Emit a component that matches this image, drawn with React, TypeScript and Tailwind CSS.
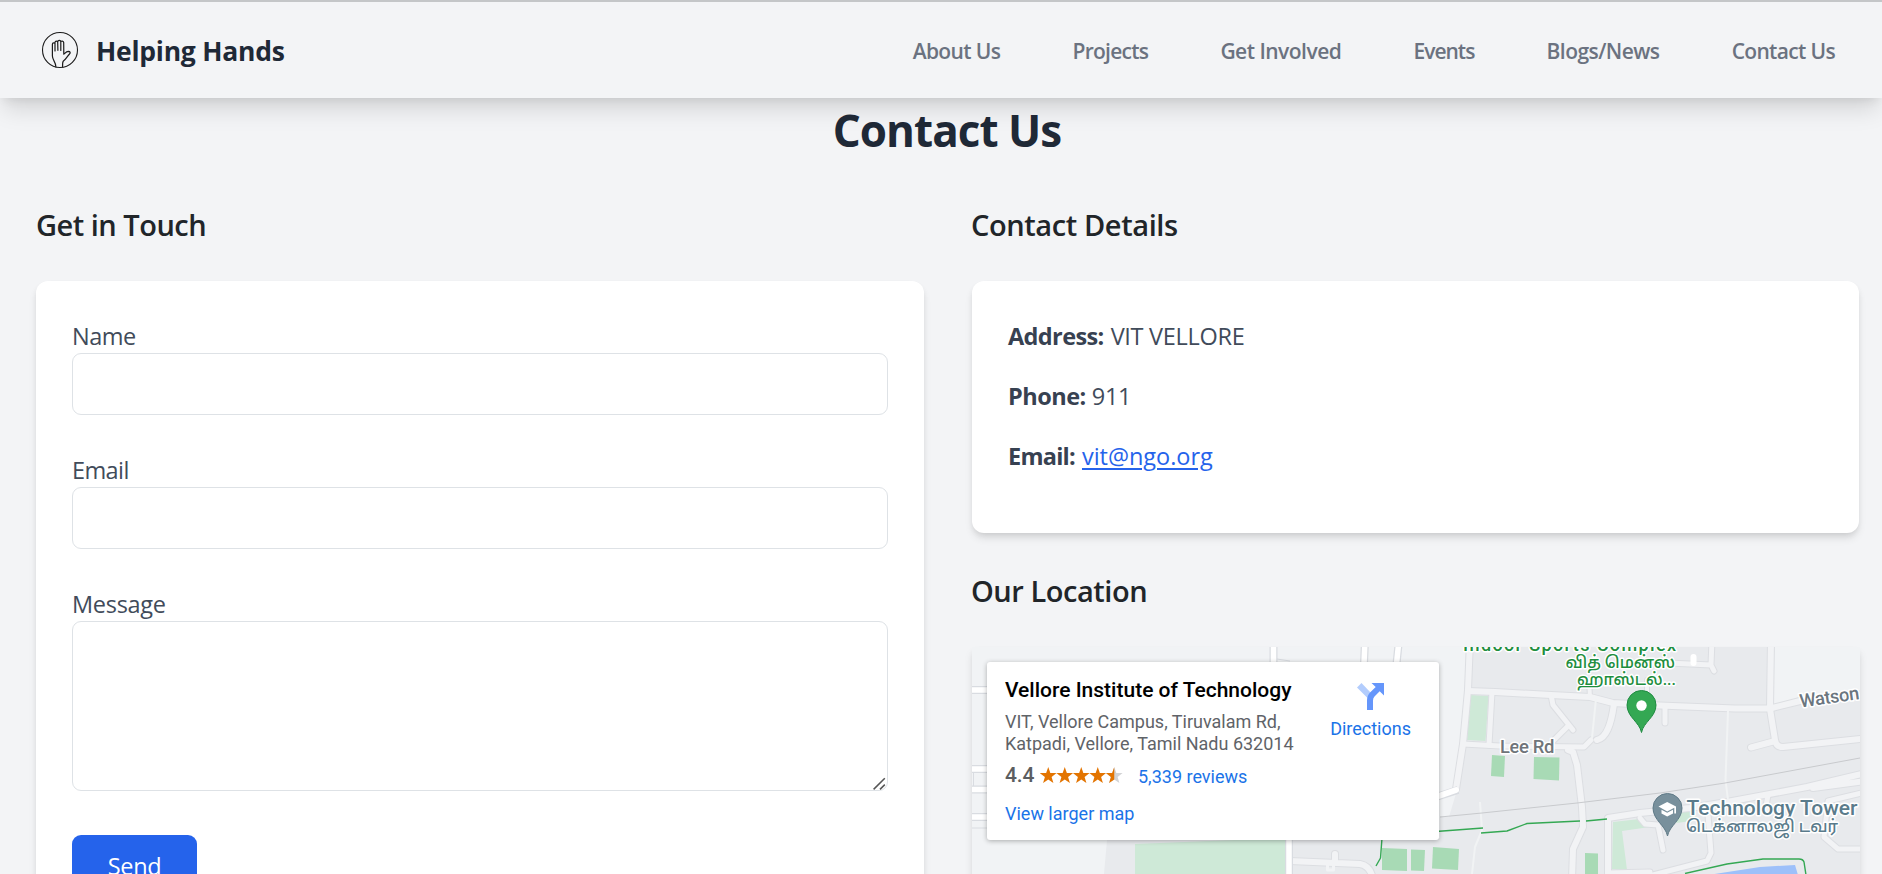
import type { ReactNode } from "react";

const navItems = [
  { label: "About Us", tracking: "tracking-[-0.62px]" },
  { label: "Projects", tracking: "tracking-[-0.76px]" },
  { label: "Get Involved", tracking: "tracking-[-0.52px]" },
  { label: "Events", tracking: "tracking-[-1px]" },
  { label: "Blogs/News", tracking: "tracking-[-0.56px]" },
  { label: "Contact Us", tracking: "tracking-[-0.66px]" },
];

function Logo() {
  return (
    <svg viewBox="0 0 38 38" className="size-[38px]" fill="none" stroke="#1c1c1c" strokeLinecap="round" strokeLinejoin="round">
      <circle cx="19" cy="19" r="17.5" strokeWidth="1.1" />
      <path
        strokeWidth="1.2"
        d="M14.9 36 C15 31 11.5 29.5 11.4 25 L11.4 13.2 C11.4 11.6 13.9 11.4 14 13 L14 20 M14 13 L14 11.2 C14.2 9.6 16.6 9.7 16.7 11.2 L16.9 19.3 M16.7 11 C16.8 8.8 19.7 8.8 19.8 10.8 L19.8 19.5 M19.8 11 C20 9.6 22.6 9.9 22.7 11.6 L22.8 23.2 C23.8 22.6 25 20.6 27.3 20.4 C29.6 20.4 29.6 22 28.3 23.2 C26.4 25 25.6 27.6 22.4 30 C21.3 31 21.6 34 21.6 36"
      />
    </svg>
  );
}

function Header() {
  return (
    <header className="relative z-10 flex h-[98px] items-center justify-between border-t-2 border-[#c4c6c8] bg-[#f3f4f6] pr-[47px] pl-[41px] shadow-[0_15px_22px_-4px_rgba(0,0,0,0.13),0_6px_9px_-4px_rgba(0,0,0,0.08)]">
      <div className="flex items-center gap-[17px]">
        <Logo />
        <span className="pt-[2px] text-[26.5px] leading-[36px] font-bold tracking-[-0.24px] text-[#1f2937]">Helping Hands</span>
      </div>
      <nav className="flex gap-[72.2px] pt-[2px]">
        {navItems.map((item) => (
          <a key={item.label} href="#" className={`text-[21px] leading-[30px] font-semibold text-[#6b7280] ${item.tracking}`}>
            {item.label}
          </a>
        ))}
      </nav>
    </header>
  );
}

function Heading({ children, className }: { children: ReactNode; className: string }) {
  return <h2 className={`-mt-[2px] mb-[38px] text-[29px] leading-[36px] font-semibold text-[#212529] ${className}`}>{children}</h2>;
}

function Label({ children, className }: { children: ReactNode; className?: string }) {
  return <label className={`block h-[36px] pt-px text-[23.5px] leading-[36px] text-[#414b5a] ${className ?? ""}`}>{children}</label>;
}

function ContactForm() {
  return (
    <form className="h-[680px] rounded-[12px] bg-white p-[36px] shadow-[0_6px_9px_-1px_rgba(0,0,0,0.1),0_3px_6px_-2px_rgba(0,0,0,0.1)]">
      <div className="mb-[36px]">
        <Label className="tracking-[-0.5px]">Name</Label>
        <input className="block h-[62px] w-full rounded-[9px] border border-[#dee2e6] px-4" />
      </div>
      <div className="mb-[36px]">
        <Label className="tracking-[-0.6px]">Email</Label>
        <input className="block h-[62px] w-full rounded-[9px] border border-[#dee2e6] px-4" />
      </div>
      <div className="mb-[44px]">
        <Label className="tracking-[-0.3px]">Message</Label>
        <div className="relative">
          <textarea className="block h-[170px] w-full resize-none rounded-[9px] border border-[#dee2e6] p-4" />
          <svg viewBox="0 0 13 13" className="absolute right-[2px] bottom-[1px] size-[13px]" stroke="#555" strokeWidth="1.5">
            <path d="M0.6 12.4 L11.8 1.2 M7 12.4 L11.8 7.6" />
          </svg>
        </div>
      </div>
      <button type="button" className="h-[60px] w-[125px] rounded-[9px] bg-[#2563eb] pt-px text-[23.5px] leading-[36px] tracking-[-0.3px] text-white">
        Send
      </button>
    </form>
  );
}

function ContactCard() {
  return (
    <div className="mb-[42px] h-[252px] w-[887px] rounded-[12px] bg-white py-[36px] pl-[36px] text-[23.5px] leading-[36px] text-[#374151] shadow-[0_6px_9px_-1px_rgba(0,0,0,0.1),0_3px_6px_-2px_rgba(0,0,0,0.1)]">
      <p className="mb-[24px] flex gap-[7px] pt-px">
        <strong className="font-bold tracking-[-0.62px]">Address:</strong>
        <span className="tracking-[-0.3px] text-[#414b5a]">VIT VELLORE</span>
      </p>
      <p className="mb-[23px] flex gap-[6px]">
        <strong className="font-bold tracking-[-0.5px]">Phone:</strong>
        <span className="tracking-[-0.3px] text-[#414b5a]">911</span>
      </p>
      <p className="flex gap-[7px] pt-px">
        <strong className="font-bold tracking-[-0.75px]">Email:</strong>
        <a href="#" className="tracking-[-0.03px] text-[#2563eb] underline decoration-2 underline-offset-[3px]">vit@ngo.org</a>
      </p>
    </div>
  );
}

const streets: { d: string; w: number }[] = [
  { w: 6, d: "M1470 640 L1468 690 L1463 744 L1456 789" },
  { w: 6, d: "M1468 691 L1495 692 L1551 695 L1590 697 L1613 703 L1660 705.500 L1735 708.500 L1770 708.500 L1800 701" },
  { w: 5, d: "M1492 692 L1489 745" },
  { w: 5, d: "M1463 744 L1500 746 L1584 747 L1591 740" },
  { w: 6, d: "M1597 740 C1606 738 1611 726 1614 704" },
  { w: 5, d: "M1551 695 L1553 705 L1573 730 M1567 727 L1552 742" },
  { w: 6, d: "M1568 750 L1573 752 L1577 765 L1582 807 L1583 827 L1573 849 L1572 880" },
  { w: 4, d: "M1589 680 L1590 697 M1647 680 L1647 700" },
  { w: 5, d: "M1668 663 L1711 665 M1712 640 L1711 665 L1714 671" },
  { w: 6, d: "M1771 640 L1770 709 L1775 740 Q1776 747 1783 747 L1870 738 M1775 741 L1751 747.500" },
  { w: 5, d: "M1665 708 L1665 723" },
  { w: 6, d: "M1608 880 L1608 818 L1640 813 L1690 808 L1727 802 L1807 787 L1866 773 M1813 788 L1866 781" },
  { w: 5, d: "M1768 795 L1765 812" },
  { w: 5, d: "M1866 792 L1828 801 L1824 837 L1838 849 L1866 849" },
  { w: 5, d: "M1645 877 L1707 861 L1711 853 L1708 815" },
  { w: 5, d: "M1640 818 L1645 824 L1658 825 L1663 850" },
  { w: 5, d: "M1608 873 L1650 872" },
  { w: 6, d: "M1290 861 L1360 864 Q1371 866 1373 880 M1335 854 L1335 862" },
];

const fields = ["1492,755 1505,756 1504,777 1491,776", "1534,757 1559.500,757.500 1559,780.500 1533.500,779", "1433,847 1459,849 1458,870 1432,868.500", "1382,848 1407,849 1407,871 1382,870", "1411,849.500 1425,850 1424,871 1411,870.500", "1585,853 1598,853.500 1598,876 1585,876"];

function MapCanvas() {
  return (
    <svg viewBox="972 647 888 227" className="block h-[227px] w-[888px]" fill="none" strokeLinejoin="round" fontFamily="Roboto, 'Noto Sans Tamil', sans-serif">
      <rect x="972" y="647" width="888" height="227" fill="#f1f3f5" />
      <path fill="#e8eaed" d="M1470 647 L1771 647 L1771 708 L1860 690 L1860 874 L1292 874 L1292 838 L1440 838 L1440 817 L1449 817 L1457 790 L1463 744 Z" />
      <path fill="#e8eaed" d="M1107 840 L1286 840 L1286 874 L1104 874 Z" />
      <path fill="#cee9d7" d="M1135 844 L1286 838 L1286 874 L1135 874 Z M1471 695 L1488.500 696 L1485.500 741 L1467 740 Z M1613 822 L1640 819 L1657 826 L1622 831 L1627 870 L1612 869 Z M1679 812 L1690 810 L1700 820 L1676 823 Z" />
      {fields.map((points) => (
        <polygon key={points} points={points} fill="#a8dab5" />
      ))}

      {streets.map((s) => (
        <path key={s.d} d={s.d} stroke="#dcdee2" strokeWidth={s.w + 2} strokeLinecap="round" />
      ))}
      {streets.map((s) => (
        <path key={`${s.d}-fill`} d={s.d} stroke="#f2f3f5" strokeWidth={s.w} strokeLinecap="round" />
      ))}
      <rect x="1327.500" y="864" width="6" height="6" stroke="#f2f3f5" strokeWidth="3" />
      <path stroke="#f1f3f4" strokeWidth="2" d="M1596 699 L1592 738 M1480 802 L1482 830 L1475 847 L1472 874 M1728 711 L1725.500 780 L1728 800" />

      <path stroke="#d9dce1" strokeWidth="8" d="M972 690 H990 M972 769 H990 M972 789.500 H990 M972 817 H990 M1273.500 640 V664 M1365 640 L1364 664 M1399 640 L1396.500 664 M1289 838 V880 M1436 797 L1458 790" />
      <path stroke="#d9dce1" strokeWidth="1" d="M972 828 H990 M973.500 772 V786 M1277 659 L1290 661" />
      <path stroke="#fff" strokeWidth="5.500" d="M972 690 H990 M972 769 H990 M972 789.500 H990 M972 817 H990 M1273.500 640 V664 M1365 640 L1364 664 M1399 640 L1396.500 664 M1289 838 V880" />
      <path stroke="#fff" strokeWidth="6" strokeLinecap="round" d="M1436 797 L1456 790 M1693.500 657 V663" />

      <path stroke="#c8cacd" strokeWidth="1" d="M1440 817 L1482 813 L1577 803 L1660 793 L1725 783 L1860 758" />
      <path stroke="#34a853" strokeWidth="1.400" d="M1436 831.500 L1483 828 M1481 833 L1507 831 L1527 823.500 L1580 821 M1586 821 L1607 819 M1382 838 L1380.500 858 L1376 866" />
      <path fill="#9dc0fa" d="M1708 875 L1760 867 L1795 865 L1798 875 Z" />
      <path stroke="#34a853" strokeWidth="1.400" d="M1685 873.500 L1727 864 L1763 859 H1799 Q1803 859 1804 862 L1806 875" />

      <g stroke="#fff" strokeWidth="3" paintOrder="stroke">
        <text x="1463" y="651" fontSize="18" fontWeight="500" fill="#1e8e3e" textLength="213">Indoor Sports Complex</text>
        <text x="1565.500" y="668" fontSize="17" fontWeight="500" fill="#1e8e3e" textLength="109.500" lengthAdjust="spacingAndGlyphs">வித் மென்ஸ்</text>
        <text x="1577" y="685" fontSize="17" fontWeight="500" fill="#1e8e3e" textLength="99" lengthAdjust="spacingAndGlyphs">ஹாஸ்டல்...</text>
        <text x="1500" y="753" fontSize="18.500" fontWeight="500" fill="#70757a" textLength="54.500">Lee Rd</text>
        <text transform="translate(1800.500 707.500) rotate(-8)" fontSize="18.500" fontWeight="500" fill="#6b7680" textLength="60">Watson</text>
        <text x="1686.500" y="814.500" fontSize="20.500" fontWeight="500" fill="#5a7b8b" textLength="171" lengthAdjust="spacingAndGlyphs">Technology Tower</text>
        <text x="1686" y="832" fontSize="17" fontWeight="500" fill="#5a7b8b" textLength="152" lengthAdjust="spacingAndGlyphs">டெக்னாலஜி டவர்</text>
      </g>

      <path fill="#34a853" stroke="#1f8b41" strokeWidth="1" d="M1641.500 732.500 C1639.500 722 1627 717 1627 705 A14.500 14.500 0 0 1 1656 705 C1656 717 1643.500 722 1641.500 732.500 Z" />
      <circle cx="1641.500" cy="705.500" r="5.200" fill="#fff" />
      <path fill="#78909c" stroke="#5f7a87" strokeWidth="1" d="M1667.500 836 C1665.500 825.500 1653 820 1653 808 A14.500 14.500 0 0 1 1682 808 C1682 820 1669.500 825.500 1667.500 836 Z" />
      <path fill="#fff" d="M1658.500 806.500 L1667.200 802 L1676 806.500 V813.500 H1674.300 V807.800 L1667.200 811.500 Z M1661.500 809.800 L1667.200 812.800 L1673 809.800 V813.500 L1667.200 816.500 L1661.500 813.500 Z" />
    </svg>
  );
}

const STAR = "M8.250 0 L10.350 6 L16.600 6.100 L11.600 9.900 L13.400 16 L8.250 12.400 L3.100 16 L4.900 9.900 L-0.100 6.100 L6.150 6 Z";

function Stars() {
  return (
    <svg viewBox="0 0 83 16" className="h-[16px] w-[83px] shrink-0">
      <clipPath id="half-star">
        <rect x="-1" y="0" width="9.250" height="16" />
      </clipPath>
      {[0, 1, 2, 3].map((i) => (
        <path key={i} d={STAR} fill="#e37400" transform={`translate(${i * 16.5} 0)`} />
      ))}
      <g transform="translate(66 0)">
        <path d={STAR} fill="#d2d3d5" />
        <path d={STAR} fill="#e37400" clipPath="url(#half-star)" />
      </g>
    </svg>
  );
}

function PlaceCard() {
  return (
    <div className="absolute top-[15px] left-[15px] flex h-[178px] w-[452px] justify-between rounded-[3px] bg-white pt-[16px] pr-[28px] pl-[18px] font-['Roboto',sans-serif] text-[18px] shadow-[0_1px_5px_rgba(0,0,0,0.3)]">
      <div className="flex flex-col items-start">
        <div className="h-[33px] text-[21px] leading-[24px] font-medium whitespace-nowrap text-black">Vellore Institute of Technology</div>
        <div className="h-[47px] leading-[22px] whitespace-nowrap text-[#5f6368]">
          VIT, Vellore Campus, Tiruvalam Rd,
          <br />
          Katpadi, Vellore, Tamil Nadu 632014
        </div>
        <div className="flex h-[30px] items-center pt-[4px]">
          <span className="w-[35px] text-[21px] leading-[24px] font-medium tracking-[-0.1px] text-[#5b5d60]">4.4</span>
          <Stars />
          <a href="#" className="ml-[15px] pt-[2px] text-[#1a73e8]">5,339 reviews</a>
        </div>
        <a href="#" className="mt-[15px] leading-[22px] text-[#1a73e8]">View larger map</a>
      </div>
      <div className="flex flex-col items-center">
        <svg viewBox="0 0 27 27" className="mt-[5px] size-[27px]">
          <path d="M4.500 0 L0 4.500 L10.500 15 L14.500 10.500 Z" fill="#b3cdfd" />
          <path d="M14.500 0 H27 V12.500 L22.700 8.300 L17.500 13.600 Q16 15.100 16 17.500 V27 H10 V17.500 Q10 12.500 13.300 9.300 L18.700 4.100 Z" fill="#6596fb" />
        </svg>
        <span className="mt-[8px] leading-[22px] text-[#1a73e8]">Directions</span>
      </div>
    </div>
  );
}

export default function App() {
  return (
    <div className="h-screen overflow-hidden bg-[#f3f4f6] font-['Open_Sans',sans-serif]">
      <Header />
      <main className="px-[36px]">
        <h1 className="mb-[48px] h-[63px] pt-[5px] pl-[12px] text-center text-[44px] leading-[54px] font-bold tracking-[-0.97px] text-[#1f2937]">Contact Us</h1>
        <div className="grid grid-cols-[888px_888px] gap-[48px]">
          <section>
            <Heading className="tracking-[-0.5px]">Get in Touch</Heading>
            <ContactForm />
          </section>
          <section>
            <Heading className="-ml-px tracking-[-0.4px]">Contact Details</Heading>
            <ContactCard />
            <Heading className="-ml-px tracking-[-0.46px]">Our Location</Heading>
            <div className="relative h-[400px] shadow-[0_6px_9px_-1px_rgba(0,0,0,0.1),0_3px_6px_-2px_rgba(0,0,0,0.1)]">
              <MapCanvas />
              <PlaceCard />
            </div>
          </section>
        </div>
      </main>
    </div>
  );
}
